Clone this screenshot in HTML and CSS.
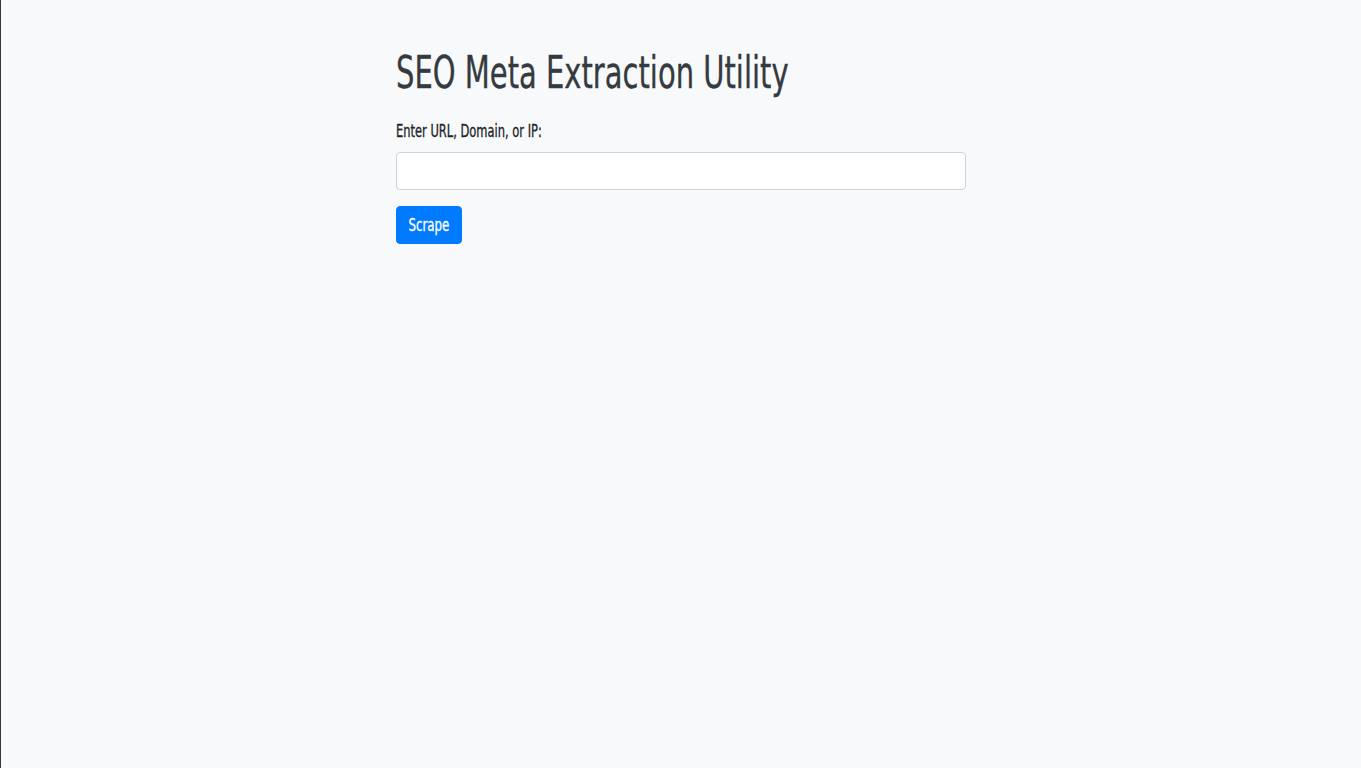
FILE: index.html
```html
<!DOCTYPE html>
<html lang="en">
<head>
<meta charset="utf-8">
<title>SEO Meta Extraction Utility</title>
<link rel="stylesheet" href="styles.css">
</head>
<body>
<div class="container">
  <h1 class="title"><span class="title-text">SEO Meta Extraction Utility</span></h1>
  <form class="form">
    <div class="form-group">
      <label class="label" for="url"><span class="label-text">Enter URL, Domain, or IP:</span></label>
      <input class="input" id="url" type="text">
    </div>
    <button class="btn" type="button"><span class="btn-text">Scrape</span></button>
  </form>
</div>
</body>
</html>
```

FILE: styles.css
```css
html, body {
  margin: 0;
  padding: 0;
  height: 100%;
}
body {
  background: #f8f9fa;
  border-left: 1px solid #343a40;
  box-sizing: border-box;
  font-family: "DejaVu Sans", sans-serif;
  font-stretch: condensed;
  color: #343a40;
}
.container {
  max-width: 570px;
  margin: 0 auto;
  padding-top: 48px;
  position: relative;
  left: -0.5px;
}
.title {
  margin: 0 0 24px;
  font-size: 40px;
  line-height: 48px;
  height: 48px;
  font-weight: normal;
  color: #343a40;
  white-space: nowrap;
}
.title-text {
  display: inline-block;
  transform-origin: 0 37.75px;
  transform: translateY(2px) scale(0.806, 1.13);
  -webkit-text-stroke: 0.3px #343a40;
}
.form-group {
  margin-bottom: 16px;
}
.label {
  display: block;
  font-size: 16px;
  line-height: 24px;
  height: 24px;
  margin-bottom: 8px;
  color: #212529;
  white-space: nowrap;
}
.label-text {
  display: inline-block;
  transform-origin: 0 17.5px;
  transform: translateY(0.5px) scale(0.797, 1.07);
  -webkit-text-stroke: 0.3px #212529;
}
.input {
  display: block;
  box-sizing: border-box;
  width: 100%;
  height: 38px;
  border: 1px solid #ced4da;
  border-radius: 4px;
  background: #fff;
  padding: 6px 12px;
  font: inherit;
}
.btn {
  display: flex;
  align-items: center;
  justify-content: center;
  box-sizing: border-box;
  width: 66px;
  height: 38px;
  padding: 0;
  border: 1px solid #007bff;
  border-radius: 4px;
  background: #007bff;
  color: #fff;
  font-family: inherit;
  font-stretch: condensed;
  font-size: 16px;
  line-height: 18px;
  cursor: pointer;
  white-space: nowrap;
}
.btn-text {
  display: inline-block;
  transform-origin: 50% 14px;
  transform: translateY(0.5px) scale(0.82, 1.07);
  -webkit-text-stroke: 0.3px #fff;
}
```
